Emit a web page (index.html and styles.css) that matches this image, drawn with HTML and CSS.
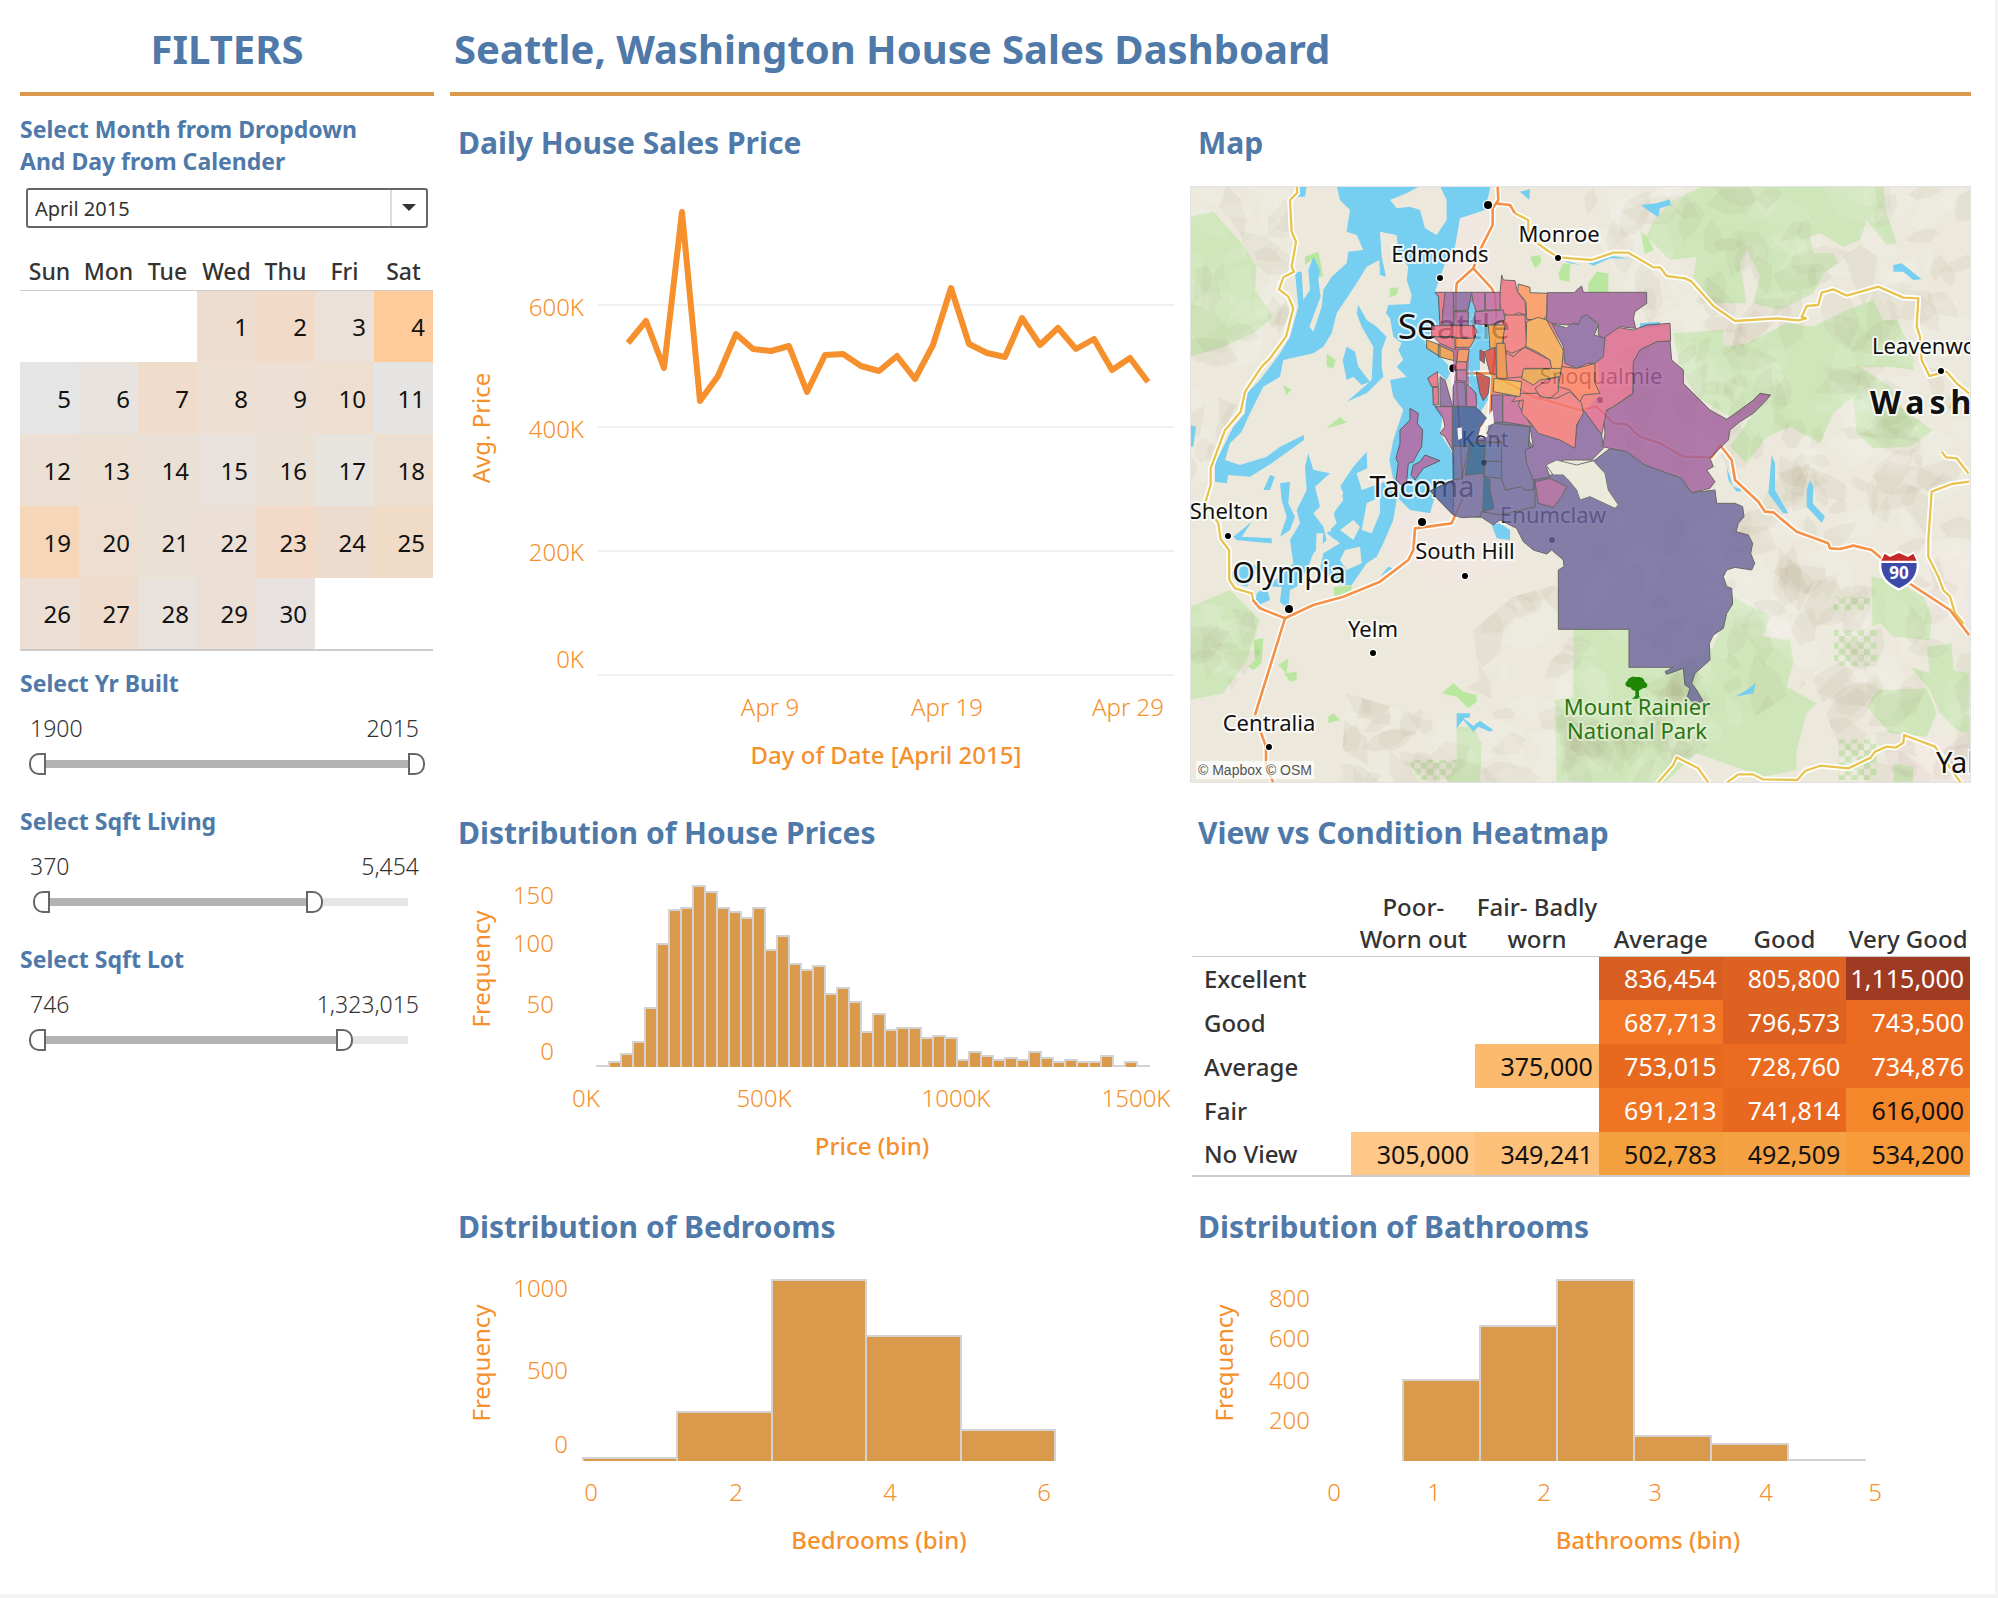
FILE: index.html
```html
<!DOCTYPE html>
<html lang="en">
<head>
<meta charset="utf-8">
<title>Seattle, Washington House Sales Dashboard</title>
<link rel="stylesheet" href="styles.css">
</head>
<body>
<div class="page">
  <aside class="filters">
    <header class="bar bar-center"><h2 class="bar-title">FILTERS</h2></header>
    <label class="filter-label month-label" for="month">Select Month from Dropdown<br>And Day from Calender</label>
    <div class="select-box">
      <select id="month" class="select"><option>April 2015</option></select>
    </div>
    <table class="calendar" id="calendar">
      <thead><tr><th>Sun</th><th>Mon</th><th>Tue</th><th>Wed</th><th>Thu</th><th>Fri</th><th>Sat</th></tr></thead>
      <tbody>
        <tr><td></td><td></td><td></td><td style="background:#eedccf">1</td><td style="background:#f2dac9">2</td><td style="background:#ebe1d9">3</td><td style="background:#ffcb9a">4</td></tr>
        <tr><td style="background:#e5e5e5">5</td><td style="background:#e8e3df">6</td><td style="background:#efdcca">7</td><td style="background:#eddfd1">8</td><td style="background:#eddfd3">9</td><td style="background:#eedecf">10</td><td style="background:#e5e4e2">11</td></tr>
        <tr><td style="background:#ece0d4">12</td><td style="background:#ece0d3">13</td><td style="background:#ebe0d6">14</td><td style="background:#e9e1dc">15</td><td style="background:#ebe0d4">16</td><td style="background:#e7e3de">17</td><td style="background:#eddfd0">18</td></tr>
        <tr><td style="background:#f6d6b9">19</td><td style="background:#eedecf">20</td><td style="background:#ebe0d4">21</td><td style="background:#ebdfd6">22</td><td style="background:#f2d9c8">23</td><td style="background:#eddccd">24</td><td style="background:#f0dbc7">25</td></tr>
        <tr><td style="background:#eddfd3">26</td><td style="background:#f0dccc">27</td><td style="background:#e8e1dc">28</td><td style="background:#ebded5">29</td><td style="background:#e7e2df">30</td><td></td><td></td></tr>
      </tbody>
    </table>

    <fieldset class="range-field">
      <legend class="filter-label">Select Yr Built</legend>
      <div class="range-values"><span>1900</span><span>2015</span></div>
      <div class="range">
        <div class="range-track" style="--hi:100%"></div>
        <input class="thumb-low" type="range" min="0" max="100" value="0" aria-label="Earliest year built">
        <input class="thumb-high" type="range" min="0" max="100" value="100" aria-label="Latest year built">
      </div>
    </fieldset>
    <fieldset class="range-field">
      <legend class="filter-label">Select Sqft Living</legend>
      <div class="range-values"><span>370</span><span>5,454</span></div>
      <div class="range">
        <div class="range-track" style="--hi:74%"></div>
        <input class="thumb-low" type="range" min="0" max="100" value="1" aria-label="Minimum living area">
        <input class="thumb-high" type="range" min="0" max="100" value="73" aria-label="Maximum living area">
      </div>
    </fieldset>
    <fieldset class="range-field">
      <legend class="filter-label">Select Sqft Lot</legend>
      <div class="range-values"><span>746</span><span>1,323,015</span></div>
      <div class="range">
        <div class="range-track" style="--hi:82%"></div>
        <input class="thumb-low" type="range" min="0" max="100" value="0" aria-label="Minimum lot area">
        <input class="thumb-high" type="range" min="0" max="100" value="81" aria-label="Maximum lot area">
      </div>
    </fieldset>
  </aside>

  <main class="main">
    <header class="bar"><h1 class="bar-title">Seattle, Washington House Sales Dashboard</h1></header>
    <div class="panels">
      <section class="panel">
        <h2 class="panel-title">Daily House Sales Price</h2>
        <svg class="chart" viewBox="0 0 732 597" role="img" aria-label="Average price by day, April 2015">
          <path class="grid" d="M148 119H724M148 241H724M148 365H724M148 489H724"/>
          <polyline class="line" points="178,157 196,135 214,182 232,26 250,215 268,190 286,148 303,163 321,165 339,160 357,206 375,169 393,168 411,180 429,185 447,170 465,193 483,159 501,102 519,158 537,167 555,171 572,132 590,159 608,142 626,163 644,153 662,184 680,172 698,196"/>
          <g class="tick end"><text x="134" y="130">600K</text><text x="134" y="252">400K</text><text x="134" y="375">200K</text><text x="134" y="482">0K</text></g>
          <g class="tick mid"><text x="320" y="530">Apr 9</text><text x="497" y="530">Apr 19</text><text x="678" y="530">Apr 29</text></g>
          <text class="axis strong mid" x="436" y="578">Day of Date [April 2015]</text>
          <text class="axis mid" transform="translate(40 242) rotate(-90)">Avg. Price</text>
        </svg>
      </section>

      <section class="panel">
        <h2 class="panel-title">Map</h2>
        <div class="map">
          <svg class="chart" viewBox="0 0 781 597" role="img" aria-label="Map of average price by zip code around Seattle">
            <defs>
              <clipPath id="hills">
                <path d="M30 18H325L330 250 300 330 330 400 270 520 190 640 130 750 90 880 30 1000zM1160 18H2375V1813H2020L1900 1500 1400 1813H900L480 1813 500 1540 700 1600 900 1500 880 1350 1000 1250 1180 1200 1350 900 1300 400 1300 260zM30 1260 220 1300 240 1420 130 1560 30 1560z"/>
              </clipPath>
              <pattern id="checker" width="38" height="38" patternUnits="userSpaceOnUse"><path fill="#c9e2b3" d="M0 0h19v19H0zM19 19h19v19H19z"/></pattern>
            </defs>
            <g transform="scale(.33333) translate(-30 -18)">
              <path fill="#ece9dc" d="M30 18H2375V1813H30z"/>
              <path fill="#f0e8e0" d="M840 120 930 70 950 330 1000 440 770 340zM690 960 830 950 860 1010 950 1060 1000 1180 760 1230 690 1130 640 1170 620 1080zM2120 1640 2375 1700V1813H2120zM2230 1130 2375 1100V1370L2250 1290z"/>
              <path class="green" d="M30 110 100 95 130 130 185 190 230 260 225 330 280 410 220 460 130 500 30 530zM30 1280 150 1230 240 1320 200 1440 130 1540 30 1560zM1570 18H2110L2120 100 2150 190 2120 195 2060 120 2040 180 1990 200 1920 160 1890 170 1900 220 1960 220 1975 250 1930 280 1900 340 1800 390 1720 370 1740 290 1700 210 1680 250 1700 370 1600 370 1540 290 1550 230 1470 240 1400 170 1420 120 1480 60zM1480 460 1630 450 1630 500 1700 490 1820 430 1900 440 2000 390 2080 360 2110 420 2150 420 2200 520 2200 570 2130 560 2040 560 2130 620 2170 690 2260 750 2190 800 2080 805 2030 760 2020 650 1960 700 1920 790 1830 740 1760 770 1700 850 1650 800 1720 700 1650 710 1550 650 1500 560zM1180 1348 1347 1350V1465H1480L1600 1400 1660 1250 1770 1310 1750 1370 1830 1380 1840 1450 1820 1520 1910 1570 1880 1600 1850 1710 1850 1770 1750 1790 1550 1720 1450 1812H1130L1125 1560 1180 1550zM2075 1190 2140 1200 2230 1250 2255 1310 2250 1380 2140 1370 2100 1330 2075 1340zM2190 1460 2250 1480 2240 1400 2315 1390 2320 1470 2367 1480V1660L2330 1650 2280 1600 2250 1530zM2090 1530 2240 1525 2270 1600 2240 1670 2130 1660 2060 1580zM830 1640 880 1640 905 1690 900 1810H800L830 1740zM2140 1750 2200 1760V1812H2140z"/>
              <path class="bright" d="M630 325 656 322 650 345 628 352zM440 520 466 540 460 565 440 560zM375 230 415 215 430 290 410 290 395 240 375 255zM1050 230 1080 225 1085 245 1065 265zM1135 280 1150 250 1172 252 1168 305 1140 300zM440 745 480 710 500 728zM1380 150 1405 175 1420 210 1395 222zM310 615 335 630 318 645zM295 1455 325 1435 320 1480zM312 1480 350 1475 350 1500 330 1505zM785 1540 820 1510 850 1535 890 1545 890 1565 865 1585 830 1550zM220 1380 250 1375 245 1450 220 1470 205 1460 225 1440zM460 1222 515 1215 515 1240 465 1255zM445 1610 460 1600 480 1620 445 1630zM1225 310 1250 275 1285 280V335H1225z"/>
              <path fill="url(#checker)" d="M1962 1252H2070V1290H1962zM1962 1350H2090V1458H1962zM1975 1678H2090V1800H1975zM680 1740H830V1800H720z"/>
              <g id="relief" clip-path="url(#hills)"></g>

              <g class="water">
                <path d="M470 18H932L915 90 840 115 825 200 795 250 765 335 780 345 778 430 750 460 735 490 800 550 815 570 800 600 770 575 745 600 762 625 765 675 790 700 780 760 825 830 825 900 770 930 750 1000 690 990 650 950 640 900 628 840 640 780 670 690 640 650 630 600 680 590 650 560 670 540 655 510 665 490 640 470 630 415 618 400 625 375 690 372 695 345 680 300 685 260 655 220 650 165 600 155 605 230 618 290 600 285 598 240 560 260 530 310 470 400 455 460 430 500 400 520 310 540 300 590 250 620 210 700 185 755 150 790 135 840 180 855 260 830 300 800 372 765V780L275 850 210 890 145 885 140 910 105 905 105 850 130 800 160 740 195 700 200 640 240 600 300 520 330 470 355 380 350 330 345 275 365 275 370 360 390 330 385 270 400 230 420 270 415 300 422 350 388 440 400 455 425 380 430 330 455 290 500 250 505 215 550 210 530 165 500 155 510 90 480 60z"/>
                <path d="M535 375 560 420 590 440 620 470 605 510 605 560 610 590 560 640 500 665 530 640 575 600 580 500 545 440 530 400zM500 500 525 515 535 560 570 605 545 615 520 590 500 600 488 540zM345 18H380L375 50 350 50zM1020 35 1050 28 1048 60zM30 735 48 740 40 800 30 800z"/>
                <path d="M385 820 400 870 450 880 405 920 420 980 400 1000 430 1040 440 1080 400 1120 385 1160 350 1220 330 1230 325 1290 300 1265 305 1220 260 1220 270 1260 225 1280 230 1240 300 1190 340 1150 330 1080 360 1030 350 990 380 930 375 860zM560 815 562 865 530 880 545 930 630 900 650 960 640 1020 610 1090 590 1130 560 1150 515 1215 480 1215 420 1170 430 1120 480 1090 440 1060 470 1030 460 1000 490 960 480 920 520 860zM160 1070 215 1025 185 1070 275 1075V1090L220 1085 170 1080zM250 930 270 885 285 890 270 930zM300 910 330 905 325 970 345 1010 330 1050 300 1070 320 1010 305 960zM600 1190 625 1160 638 1165zM935 1035 960 1030 990 1050V1080L950 1075zM150 1180 200 1150 240 1160 200 1220 170 1210z"/>
                <path d="M865 365 880 370 885 430 895 435H930V510L900 510 900 570 930 590 935 640 900 700 880 640 860 590 865 520 895 480 890 440 862 430z"/>
                <path d="M1383 75 1430 70 1470 58 1472 75 1440 85 1435 112 1410 95zM2140 255 2165 250 2225 298 2200 300 2170 275 2140 275zM1380 430 1440 425 1440 440 1380 445zM1775 825 1785 850 1785 930 1825 1000 1810 1000 1765 940zM1880 930 1890 900 1900 920 1898 970 1935 1010 1925 1028 1880 980zM1640 860 1660 920 1690 930 1670 935 1645 900zM1665 1550 1700 1530 1728 1508 1720 1540zM830 1600 870 1600 870 1612 850 1615 880 1638 900 1622 940 1650 930 1655 895 1640 880 1655 850 1620 830 1645zM1135 235 1200 255 1170 250zM1225 250 1300 228 1350 236 1290 235 1240 257zM1760 1806H1870L1880 1812H1760z"/>
              </g>
              <g class="island">
                <path d="M630 60 680 40 720 18H780L800 60 800 120 770 165 735 145 720 90 690 80 650 85z"/>
                <path d="M450 925 475 905 490 940 465 990 450 1060 430 1010zM495 1110 540 1100 545 1150 500 1170 480 1140zM480 1050 520 1020 540 1040 520 1080zM410 1060 430 1060 425 1140 405 1170zM560 970 600 950 600 1000 575 1060 545 1050z"/>
              </g>

              <g class="road case">
                <path d="M350 18 352 38 330 60 335 155 348 185 335 260 342 275 310 292 297 328 325 350 340 385 318 470 270 535 245 560 195 635 182 695 140 745 135 750 92 865V915L75 970 115 1030 122 1078 147 1110 148 1200 165 1225 215 1240 220 1262 240 1285 315 1315 225 1605M240 1650 258 1700V1760L282 1812M315 1315 400 1275 490 1250 600 1205 685 1140 700 1110 705 1045 815 1030 850 950 830 600 828 340 830 310 880 265 905 200 938 135V85L955 60 953 18M880 265 935 325 945 345 950 420 935 630 930 720 900 740M945 70 990 75 1005 100 1045 120V170L1100 210 1135 232 1235 240 1300 218H1345L1420 262H1440L1460 288 1515 295 1535 305 1600 378 1665 423 1790 415 1855 421 1878 415 1865 410 1880 378 1915 375 1925 338 1960 328 2000 347 2095 320 2170 353 2215 355 2210 440 2220 470 2225 540 2248 588 2300 575 2330 610 2367 640M860 580H930L1060 650 1200 690 1250 680 1300 730 1340 733 1380 770 1440 790 1510 830 1595 832 1620 795 1655 840 1665 900 1735 965 1755 995 1780 997 1850 1055 1945 1090 1950 1105 1980 1107 2020 1097 2075 1110 2110 1140M2180 1205 2310 1290 2367 1365M2285 815 2298 832 2330 835 2365 880M2367 905 2315 912 2255 935 2245 1080V1130L2275 1190 2290 1230 2310 1250 2325 1300 2350 1330M1430 1812 1480 1755 1490 1732 1555 1765 1588 1812M1635 1812 1675 1783H1718L1748 1798 1852 1800 1875 1773 1922 1757 2005 1765 2072 1733 2085 1715 2120 1700 2147 1703 2170 1688 2172 1665 2265 1700 2345 1812"/>
              </g>
              <g class="road yellow">
                <path d="M350 18 352 38 330 60 335 155 348 185 335 260 342 275 310 292 297 328 325 350 340 385 318 470 270 535 245 560 195 635 182 695 140 745 135 750 92 865V915L75 970 115 1030 122 1078 147 1110 148 1200 165 1225 215 1240 220 1262M1005 100 1045 120V170L1100 210 1135 232 1235 240 1300 218H1345L1420 262H1440L1460 288 1515 295 1535 305 1600 378 1665 423 1790 415 1855 421 1878 415 1865 410 1880 378 1915 375 1925 338 1960 328 2000 347 2095 320 2170 353 2215 355 2210 440 2220 470 2225 540 2248 588 2300 575 2330 610 2367 640M2325 640 2310 685M2285 815 2298 832 2330 835 2365 880M2367 905 2315 912 2255 935 2245 1080V1130L2275 1190 2290 1230 2310 1250 2325 1300 2350 1330M1430 1812 1480 1755 1490 1732 1555 1765 1588 1812M1635 1812 1675 1783H1718L1748 1798 1852 1800 1875 1773 1922 1757 2005 1765 2072 1733 2085 1715 2120 1700 2147 1703 2170 1688 2172 1665 2265 1700 2345 1812"/>
              </g>
              <g class="road orange">
                <path d="M218 1260 240 1285 315 1315 225 1605M240 1650 258 1700V1760L282 1812M315 1315 400 1275 490 1250 600 1205 685 1140 700 1110 705 1045 815 1030 850 950 830 600 828 340 830 310 880 265 905 200 938 135V85L955 60 953 18M880 265 935 325 945 345 950 420 935 630 930 720 900 740M945 70 990 75 1005 100M860 580H930L1060 650 1200 690 1250 680 1300 730 1340 733 1380 770 1440 790 1510 830 1595 832 1620 795 1655 840 1665 900 1735 965 1755 995 1780 997 1850 1055 1945 1090 1950 1105 1980 1107 2020 1097 2075 1110 2110 1140M2180 1205 2310 1290 2367 1365"/>
              </g>
              <g class="dots">
                <circle cx="924" cy="75" r="12"/><circle cx="820" cy="565" r="12"/><circle cx="726" cy="1026" r="12"/><circle cx="327" cy="1287" r="12"/>
                <circle cx="780" cy="294" r="9"/><circle cx="1134" cy="234" r="9"/><circle cx="1260" cy="660" r="9"/><circle cx="912" cy="848" r="9"/><circle cx="144" cy="1068" r="9"/><circle cx="1116" cy="1080" r="9"/><circle cx="855" cy="1188" r="9"/><circle cx="579" cy="1419" r="9"/><circle cx="267" cy="1701" r="9"/><circle cx="2283" cy="573" r="9"/>
              </g>
            </g>

            <g class="place mid">
              <text x="250" y="76">Edmonds</text><text x="369" y="56">Monroe</text><text x="411" y="198">Snoqualmie</text><text x="295" y="261">Kent</text><text x="363" y="337">Enumclaw</text><text x="39" y="333">Shelton</text><text x="275" y="373">South Hill</text><text x="183" y="451">Yelm</text><text x="79" y="545">Centralia</text>
            </g>
            <g class="place"><text x="682" y="168">Leavenworth</text></g>
            <g class="city mid"><text x="232" y="311">Tacoma</text><text x="99" y="397">Olympia</text></g>
            <text class="city metro mid" x="264" y="153">Seattle</text>
            <g class="city"><text x="746" y="587">Yakima</text></g>
            <text class="state" x="680" y="228">Washington</text>

            <g transform="scale(.33333) translate(-30 -18)">
              <g class="zips">
                <g>
                  <path fill="#6d669d" d="M870 1010 905 960 960 900 1060 900 1100 890 1180 860 1245 840 1290 805 1340 815 1400 855 1505 895 1535 938 1605 930 1610 970 1665 970 1688 980 1692 1010 1675 1030 1668 1055 1705 1065 1718 1090 1712 1120 1724 1150 1715 1170 1665 1162 1640 1170 1630 1190 1640 1220 1655 1225 1658 1272 1640 1300 1630 1345 1600 1365 1588 1390 1590 1440 1545 1480 1535 1510 1550 1530 1570 1565 1540 1568 1522 1550 1530 1525 1515 1515 1510 1465 1460 1483 1455 1475 1480 1462H1347V1348H1135V1170L1152 1160 1150 1140 1115 1110 1100 1122 1060 1110 1030 1085 1010 1045 960 1020 940 1035 905 1012z"/>
                  <path fill="#a1619d" d="M1470 483 1475 540 1510 570V610L1550 650 1590 690 1640 718 1680 690 1720 660 1740 640 1772 645 1750 670 1720 700 1680 725 1650 750 1645 780 1590 835 1600 860 1580 870 1605 905 1590 925 1535 938 1505 895 1395 855 1340 815 1290 805 1268 800 1275 760 1270 700 1360 640 1358 545 1380 510 1430 485z"/>
                  <path fill="#dd688e" d="M1275 470 1300 440 1360 450 1400 435 1470 430 1472 483 1430 485 1380 510 1360 545 1358 640 1300 680 1280 690 1265 765 1240 730 1210 690 1215 640 1245 640V560z"/>
                  <path fill="#ba65a0" d="M690 685 715 700 712 730 728 750 725 800 710 825 700 845 685 850 680 905 665 915 648 900 655 850 648 835 660 790V750L690 720zM735 825 780 842 730 865 705 900 693 885 700 855 720 845z"/>
                </g>
                <g transform="translate(630 240)">
                  <g stroke="none">
                    <path fill="#f37678" d="M335 160H480L520 280 620 240 630 400 580 460 560 530 440 500 340 480 305 400 320 340z"/>
                    <path fill="#b5649f" d="M150 97H330V195H240V240L235 330 240 440H187L190 300 145 280z"/>
                    <path fill="#6d669d" d="M296 480H420V560H240L260 535 292 530z"/>
                    <path fill="#76cff1" d="M233 130 240 125 252 130 255 155 252 190 262 200 296 200 296 265 262 275 250 340 262 400 240 350 236 270 262 220 250 195 235 195z"/>
                  </g>
                  <path fill="#6d669d" d="M188 560 200 550 335 545 400 520 430 560 435 690V740L330 765 275 755 270 770 215 773 190 765 120 693 190 660z"/>
                  <path fill="#4a5f9b" d="M120 693 190 660 190 765z"/>
                  <path fill="#5b66a0" d="M190 560 240 550 228 600 215 655 190 660zM285 548H335V655L280 650zM285 604H335"/>
                  <path fill="#375797" d="M187 440H258L290 475 270 500 260 545 230 560 188 558z"/>
                  <path fill="#285e8c" d="M240 550 285 548 283 640 225 645 235 590zM283 645 300 660V690L312 745 278 755z"/>
                  <path fill="#6d669d" d="M290 520 310 490 420 500 415 560 435 565 430 690 405 690 395 680 345 690 335 655V545z"/>
                  <path fill="#8765a2" d="M420 500 440 495 515 540 555 560 560 500 580 450 610 490 635 525 640 565 605 600 520 600 470 625 480 650 430 660 410 610 405 570 430 560z"/>
                  <path fill="#cb6698" d="M338 405 395 410 385 435 400 460 425 500 338 485z"/>
                  <path fill="#8f62a0" d="M305 405H338V488L305 485z"/>
                  <path fill="#a9619d" d="M435 665 480 655 530 680 515 710 490 742 445 730z"/>
                  <path fill="#ee7080" d="M335 45 340 60 375 62 382 95 405 125 408 165 385 158 360 172 335 155 328 125z"/>
                  <path fill="#ff955b" d="M385 72 420 82 420 98 472 100 470 165 460 180 410 178 408 125 383 95z"/>
                  <path fill="#a1619d" d="M472 98H555L560 90 575 78 580 97H770V130L735 155 730 175 737 205 690 200 640 235 625 225V190L590 165 565 190 530 195 485 190 470 180z"/>
                  <path fill="#8765a2" d="M485 190 530 204 545 190 565 194 575 170 590 165 625 195 613 225 645 235 640 290 615 310 590 310 560 325 525 310 520 260z"/>
                  <path fill="#f37678" d="M345 165H405L410 255 370 290 350 280 340 245V190zM345 270 365 280 405 262 480 300 487 325 405 325V350L345 355z"/>
                  <path fill="#f9a750" d="M410 185 445 172 470 180 500 235 520 270 515 330 485 325 480 300 440 275 408 260z"/>
                  <path fill="#eba144" d="M400 327 515 325 510 350 450 360 430 375 395 355z"/>
                  <path fill="#ff7d5f" d="M505 380 515 320 560 325 615 310 615 370 630 400 580 405 570 425 540 390z"/>
                  <path fill="#f37678" d="M435 385 470 360 505 350V395L480 415 450 410zM400 420 365 425 380 410 395 400 440 400 460 412 500 415 540 395 575 430 580 460 560 495 555 565 510 540 445 520 420 485 395 460z"/>
                  <path fill="#e96a80" d="M135 97H165V125L158 150 160 195H150L145 110zM125 197H250L262 215 250 235 125 230zM130 230H195V270L150 250zM200 305H230V330H195zM113 355 142 335 145 380 125 380zM128 382H145V435H130z"/>
                  <path fill="#a1619d" d="M165 97 190 97V195H155zM192 155H235V195H192z"/>
                  <path fill="#8765a2" d="M190 97H245L235 150 192 153zM190 365 225 368 228 440 190 438zM150 350 165 360 188 440 150 438z"/>
                  <path fill="#ba65a0" d="M245 97H285V150L260 155 250 130zM285 97H330V150H285zM255 155 340 150 345 180 300 195 255 190zM200 330H230V365L200 360zM230 370 258 400 260 440H230zM135 440H187V570L165 530 150 520 165 500 160 475z"/>
                  <path fill="#f58a50" d="M195 235H255L240 262H195zM205 268H238L232 305H200z"/>
                  <path fill="#f09a3f" d="M110 240 150 255V290L110 265zM145 255 190 275 192 302 145 290zM295 195H345L335 265H300z"/>
                  <path fill="#ee8a3a" d="M320 250H345L352 355H320z"/>
                  <path fill="#dd483c" d="M283 275 315 262 320 345 300 340zM258 335 300 355 295 400 280 422 270 400z"/>
                  <path fill="#b9304f" d="M270 270 283 275V310L270 300z"/>
                  <path fill="#f6b04a" d="M312 355 395 365 390 410 310 395z"/>
                </g>
              </g>
              <path fill="#eceadb" stroke="#777" stroke-width="3" d="M1098 855 1130 840 1190 855 1240 842 1275 880 1285 930 1315 975 1305 985 1230 950 1200 960 1190 930 1165 900 1150 885 1120 885z"/>
              <path fill="#f7f5f0" d="M832 745 845 742 846 775 835 780zM905 740 930 700 938 690 942 730 915 740 918 770 900 765zM812 590 825 570 822 610 815 625z"/>
              <g fill="#1f8505"><path d="M1352 1522C1335 1524 1332 1508 1342 1504 1344 1492 1360 1488 1368 1492 1382 1488 1394 1496 1394 1506 1408 1512 1402 1526 1390 1524 1384 1530 1380 1528 1377 1532V1548L1386 1556H1356L1366 1548V1532C1360 1532 1354 1530 1352 1522z"/></g>
              <g>
                <path fill="#fff" d="M2098 1145 2112 1114 2130 1124 2157 1112 2184 1124 2202 1114 2216 1145C2222 1190 2195 1215 2157 1232 2119 1215 2092 1190 2098 1145z"/>
                <path fill="#c62828" d="M2104 1142 2114 1121 2130 1131 2157 1119 2184 1131 2200 1121 2210 1142z"/>
                <path fill="#3d4aa8" d="M2104 1149H2210C2212 1188 2190 1210 2157 1225 2124 1210 2102 1188 2104 1149z"/>
              </g>
            </g>
            <text class="shield mid" x="709" y="393">90</text>
            <g class="park mid"><text x="447" y="529">Mount Rainier</text><text x="447" y="553">National Park</text></g>
          </svg>
          <div class="credit"><a href="#mapbox">© Mapbox</a> <a href="#osm">© OSM</a></div>
        </div>
      </section>

      <section class="panel">
        <h2 class="panel-title">Distribution of House Prices</h2>
        <svg class="chart" viewBox="0 0 732 299" role="img" aria-label="Histogram of house prices">
          <g class="bars" data-start="147" data-step="12" data-heights="2,6,14,26,60,124,158,160,182,176,160,156,150,160,118,132,104,98,102,74,80,66,36,54,38,40,40,30,32,30,8,16,12,8,10,8,16,10,6,8,6,6,12,2,6,2"></g>
          <g class="tick end"><text x="104" y="28">150</text><text x="104" y="76">100</text><text x="104" y="137">50</text><text x="104" y="184">0</text></g>
          <g class="tick mid"><text x="136" y="231">0K</text><text x="314" y="231">500K</text><text x="506" y="231">1000K</text><text x="686" y="231">1500K</text></g>
          <text class="axis strong mid" x="422" y="279">Price (bin)</text>
          <text class="axis mid" transform="translate(40 93) rotate(-90)">Frequency</text>
        </svg>
      </section>

      <section class="panel">
        <h2 class="panel-title">View vs Condition Heatmap</h2>
        <table class="heatmap">
          <thead><tr><th></th><th>Poor-<br>Worn out</th><th>Fair- Badly<br>worn</th><th>Average</th><th>Good</th><th>Very Good</th></tr></thead>
          <tbody>
            <tr><th>Excellent</th><td></td><td></td><td class="lt" style="background:#d85d20">836,454</td><td class="lt" style="background:#dd6121">805,800</td><td class="lt" style="background:#9f3b22">1,115,000</td></tr>
            <tr><th>Good</th><td></td><td></td><td class="lt" style="background:#f17524">687,713</td><td class="lt" style="background:#dd6121">796,573</td><td class="lt" style="background:#ea6a20">743,500</td></tr>
            <tr><th>Average</th><td></td><td style="background:#fcba6e">375,000</td><td class="lt" style="background:#e6691e">753,015</td><td class="lt" style="background:#eb6c21">728,760</td><td class="lt" style="background:#ea6b21">734,876</td></tr>
            <tr><th>Fair</th><td></td><td></td><td class="lt" style="background:#ef7423">691,213</td><td class="lt" style="background:#e96820">741,814</td><td style="background:#f5872b">616,000</td></tr>
            <tr><th>No View</th><td style="background:#ffc788">305,000</td><td style="background:#fdc078">349,241</td><td style="background:#f3a03f">502,783</td><td style="background:#f4a244">492,509</td><td style="background:#f79a39">534,200</td></tr>
          </tbody>
        </table>
      </section>

      <section class="panel">
        <h2 class="panel-title">Distribution of Bedrooms</h2>
        <svg class="chart" viewBox="0 0 732 292" role="img" aria-label="Histogram of bedrooms">
          <g class="bars" data-start="133" data-step="94.4" data-heights="4,50,182,126,32"></g>
          <g class="tick end"><text x="118" y="27">1000</text><text x="118" y="109">500</text><text x="118" y="183">0</text></g>
          <g class="tick mid"><text x="141" y="231">0</text><text x="286" y="231">2</text><text x="440" y="231">4</text><text x="594" y="231">6</text></g>
          <text class="axis strong mid" x="429" y="279">Bedrooms (bin)</text>
          <text class="axis mid" transform="translate(40 93) rotate(-90)">Frequency</text>
        </svg>
      </section>

      <section class="panel">
        <h2 class="panel-title">Distribution of Bathrooms</h2>
        <svg class="chart" viewBox="0 0 781 292" role="img" aria-label="Histogram of bathrooms">
          <g class="bars" data-start="213" data-step="77" data-heights="82,136,182,26,18,2"></g>
          <g class="tick end"><text x="120" y="37">800</text><text x="120" y="77">600</text><text x="120" y="119">400</text><text x="120" y="159">200</text></g>
          <g class="tick mid"><text x="144" y="231">0</text><text x="244" y="231">1</text><text x="354" y="231">2</text><text x="465" y="231">3</text><text x="576" y="231">4</text><text x="685" y="231">5</text></g>
          <text class="axis strong mid" x="458" y="279">Bathrooms (bin)</text>
          <text class="axis mid" transform="translate(43 93) rotate(-90)">Frequency</text>
        </svg>
      </section>
    </div>
  </main>
</div>
<script src="charts.js"></script>
</body>
</html>
```
FILE: styles.css
```css
* { box-sizing: border-box; }

body {
  margin: 0;
  background: #f4f4f4;
  color: #333;
  font-family: "Noto Sans", sans-serif;
}

.page {
  display: grid;
  grid-template-columns: 414fr 1521fr;
  gap: 16px;
  min-height: calc(100vh - 4px);
  margin: 0 3px 4px 0;
  padding: 0 24px 30px 20px;
  background: #fff;
}

/* Column headings */
.bar {
  padding: 22px 0 16px 4px;
  border-bottom: 4px solid #db994b;
}
.bar-center { padding-left: 0; text-align: center; }
.bar-title {
  margin: 0;
  color: #4e79a8;
  font-size: 40px;
  font-weight: 700;
  line-height: 54px;
}

/* Filters */
.filter-label {
  display: block;
  padding: 0;
  color: #4e79a8;
  font-size: 23px;
  font-weight: 700;
  line-height: 32px;
}
.month-label { margin-top: 17px; }

.select-box {
  position: relative;
  margin: 11px 6px 24px;
}
.select {
  display: block;
  width: 100%;
  height: 40px;
  padding: 0 48px 0 7px;
  border: 2px solid #666;
  border-radius: 3px;
  appearance: none;
  background: #fff;
  color: #333;
  font-family: inherit;
  font-size: 20px;
}
.select-box::after {
  content: "";
  position: absolute;
  inset: 2px 36px 2px auto;
  border-left: 2px solid #ddd;
}
.select-box::before {
  content: "";
  position: absolute;
  top: 16px;
  right: 12px;
  border: 7px solid transparent;
  border-top-color: #333;
  border-bottom: 0;
}

.calendar {
  width: calc(100% - 1px);
  border-collapse: collapse;
  table-layout: fixed;
}
.calendar tbody { border-top: 1px solid #ccc; border-bottom: 2px solid #ccc; }
.calendar th {
  height: 38px;
  padding: 0;
  font-size: 23px;
  font-weight: 500;
  text-align: center;
}
.calendar td {
  height: 72px;
  padding: 0 8px;
  color: #111;
  font-size: 24px;
  text-align: right;
}

.range-field {
  margin: 16px 0 30px;
  padding: 0;
  border: 0;
}
.range-field + .range-field { margin-top: 0; }
.range-values {
  display: flex;
  justify-content: space-between;
  padding: 13px 15px 9px 10px;
  font-size: 23px;
  font-weight: 350;
  line-height: 32px;
}
.range {
  display: grid;
  align-items: center;
  height: 22px;
  margin: 0 9px;
}
.range > * { grid-area: 1 / 1; }
.range-track {
  height: 8px;
  margin: 0 17px;
  background: linear-gradient(to right, #b3b3b3 var(--hi), #e6e6e6 var(--hi));
}
.range input {
  width: 100%;
  height: 22px;
  margin: 0;
  appearance: none;
  background: none;
  pointer-events: none;
}
.range input::-webkit-slider-thumb {
  width: 17px;
  height: 22px;
  border: 2px solid #666;
  appearance: none;
  background: #fff;
  pointer-events: auto;
}
.thumb-low::-webkit-slider-thumb { border-radius: 10px 0 0 10px; }
.thumb-high::-webkit-slider-thumb { border-radius: 0 10px 10px 0; }

/* Panels */
.panels {
  display: grid;
  grid-template-columns: 732fr 781fr;
  gap: 3px 8px;
}
.panel { min-width: 0; padding-top: 26px; }
.panel-title {
  margin: 0 0 22px 8px;
  color: #4e79a8;
  font-size: 30px;
  font-weight: 700;
  line-height: 42px;
}

/* Charts */
.chart { display: block; width: 100%; }
.grid { stroke: #f0f0f0; stroke-width: 2; }
.line { fill: none; stroke: #f5902c; stroke-width: 6; stroke-linejoin: round; }
.bar-edge { fill: #d3d3d3; }
.bar-fill { fill: #db994b; }
.tick, .axis { fill: #f5902c; font-size: 24px; font-weight: 350; }
.axis { font-weight: 400; }
.strong { font-weight: 500; }
.mid { text-anchor: middle; }
.end { text-anchor: end; }

/* Map */
.map {
  position: relative;
  overflow: hidden;
  outline: 1px solid #e3e3e3;
  outline-offset: -1px;
}
.green { fill: #cfe6ba; }
.bright { fill: #b9e79f; }
.water { fill: #76cff1; }
.island { fill: #ece9dc; }
.road { fill: none; stroke-linejoin: round; }
.case { stroke: #fff; stroke-width: 17; }
.yellow { stroke: #e8c34f; stroke-width: 7; }
.orange { stroke: #f4924a; stroke-width: 8; }
.dots { stroke: #fff; stroke-width: 8; paint-order: stroke; }
.place, .city, .park, .state {
  fill: #111;
  stroke: rgba(255, 255, 255, .8);
  stroke-width: 4px;
  stroke-linejoin: round;
  paint-order: stroke;
}
.place { font-size: 22px; }
.city { font-size: 29px; }
.metro { font-size: 35px; }
.park { font-size: 22px; fill: #2a7613; stroke: rgba(230, 240, 215, .7); }
.state { font-size: 32px; font-weight: 700; letter-spacing: 5px; }
.shield { fill: #fff; font-size: 17px; font-weight: 700; }
.zips { opacity: .82; stroke: #4b4b4b; stroke-width: 3; }
.credit {
  position: absolute;
  left: 6px;
  bottom: 4px;
  padding: 0 2px;
  background: rgba(255, 255, 255, .7);
  font: 14px/18px "Liberation Sans", sans-serif;
}
.credit a { color: #555; text-decoration: none; }

/* Heatmap */
.heatmap {
  width: calc(100% - 3px);
  margin-left: 2px;
  border-collapse: collapse;
  table-layout: fixed;
  font-size: 24px;
}
.heatmap tbody { border-top: 1px solid #ccc; border-bottom: 2px solid #ccc; }
.heatmap th { padding: 0; font-weight: 500; }
.heatmap thead th {
  height: 80px;
  padding-bottom: 1px;
  line-height: 32px;
  vertical-align: bottom;
  white-space: nowrap;
}
.heatmap thead th:first-child { width: 20.5%; }
.heatmap tbody th { padding-left: 12px; text-align: left; }
.heatmap td {
  height: 44px;
  padding: 0 6px 0 0;
  color: #111;
  font-size: 25px;
  line-height: 34px;
  text-align: right;
}
.heatmap .lt { color: #fff; }
```
FILE: charts.js
```
const NS = 'http://www.w3.org/2000/svg';

function add(parent, tag, attrs) {
  const el = document.createElementNS(NS, tag);
  for (const key in attrs) el.setAttribute(key, attrs[key]);
  parent.appendChild(el);
}

// Histogram bars, standing on the baseline at y = 191.
for (const group of document.querySelectorAll('.bars')) {
  const start = Number(group.dataset.start);
  const step = Number(group.dataset.step);
  const heights = group.dataset.heights.split(',').map(Number);
  const edge = i => Math.round(start + i * step);
  heights.forEach((h, i) => {
    add(group, 'rect', { class: 'bar-edge', x: edge(i) - 1, y: 191 - h, width: edge(i + 1) - edge(i) + 2, height: h });
  });
  heights.forEach((h, i) => {
    add(group, 'rect', { class: 'bar-fill', x: edge(i) + 1, y: 193 - h, width: edge(i + 1) - edge(i) - 2, height: h - 2 });
  });
}

// Hill shading: broad faceted patches from a fixed seed.
const relief = document.getElementById('relief');
let seed = 11;
const rnd = () => (seed = (seed * 16807) % 2147483647) / 2147483647;
for (let i = 0; i < 900; i++) {
  const x = 30 + rnd() * 2340;
  const y = 18 + rnd() * 1795;
  const r = 30 + rnd() * 75;
  const a = rnd() * 3.1;
  const pts = [[1, .2], [.4, .55], [-.5, .5], [-1, -.1], [-.3, -.5], [.6, -.4]].map(([u, v]) => {
    const px = u * r * (.7 + rnd() * .5), py = v * r * (.5 + rnd() * .7);
    return (x + px * Math.cos(a) - py * Math.sin(a)).toFixed(0) + ',' + (y + px * Math.sin(a) + py * Math.cos(a)).toFixed(0);
  });
  add(relief, 'polygon', { points: pts.join(' '), fill: i % 2 ? '#9a9060' : '#ffffff', 'fill-opacity': i % 2 ? .08 : .09 });
}
```
